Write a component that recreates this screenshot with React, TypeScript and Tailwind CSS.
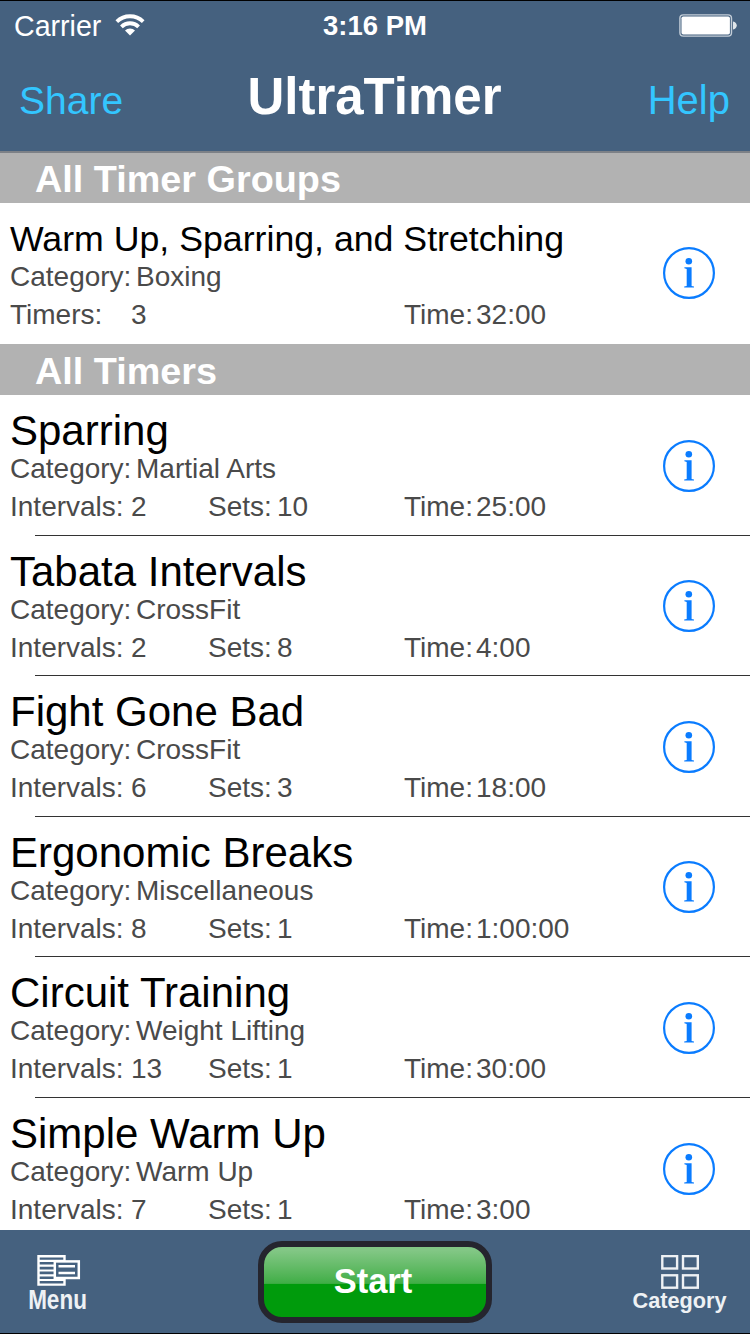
interface Timer {
  name: string
  category: string
  intervals: string
  sets: string
  time: string
}

const TIMERS: Timer[] = [
  { name: 'Sparring', category: 'Martial Arts', intervals: '2', sets: '10', time: '25:00' },
  { name: 'Tabata Intervals', category: 'CrossFit', intervals: '2', sets: '8', time: '4:00' },
  { name: 'Fight Gone Bad', category: 'CrossFit', intervals: '6', sets: '3', time: '18:00' },
  { name: 'Ergonomic Breaks', category: 'Miscellaneous', intervals: '8', sets: '1', time: '1:00:00' },
  { name: 'Circuit Training', category: 'Weight Lifting', intervals: '13', sets: '1', time: '30:00' },
  { name: 'Simple Warm Up', category: 'Warm Up', intervals: '7', sets: '1', time: '3:00' },
]

function WifiIcon() {
  return (
    <svg className="mb-0.5" width="30" height="22" viewBox="0 0 30 22" fill="none" stroke="white" strokeWidth="3.8">
      <path d="M1.8 7.6a19 19 0 0 1 26.4 0" />
      <path d="M6.4 12.8a12.2 12.2 0 0 1 17.2 0" />
      <path d="M15 21.6l-5-5.1a7 7 0 0 1 10 0z" fill="white" stroke="none" />
    </svg>
  )
}

function BatteryIcon() {
  return (
    <svg width="58" height="24" viewBox="0 0 58 24">
      <rect x="0.9" y="0.9" width="51.6" height="21.2" rx="3.4" fill="none" stroke="#c3cdd7" strokeWidth="1.4" />
      <rect x="2.5" y="2.5" width="48.4" height="18" rx="1.8" fill="white" />
      <path d="M54 7.5c5 1 5 7 0 8z" fill="#dfe5ea" />
    </svg>
  )
}

function InfoIcon() {
  return (
    <svg className="shrink-0" width="52" height="52" viewBox="0 0 52 52">
      <circle cx="26" cy="26" r="24.9" fill="none" stroke="#0a7cff" strokeWidth="2.2" />
      <circle cx="25.8" cy="14.2" r="3.3" fill="#0a7cff" />
      <path d="M21.4 20.2h7.2v18.8l2.4 0.5v1.1H21.2v-1.1l2.5-0.5v-17l-2.3-0.7z" fill="#0a7cff" />
    </svg>
  )
}

function MenuIcon() {
  return (
    <svg width="44" height="32" viewBox="0 0 44 32" fill="none" stroke="white">
      <path d="M27.5 6V1.2H1.5v28.4h26V24" strokeWidth="2.4" />
      <path d="M1 5.9h26M1 10.6h16M1 15.5h16M1 20.4h16M1 25h26" strokeWidth="2.1" />
      <rect x="17.8" y="6.4" width="24" height="16.6" strokeWidth="2.5" />
      <path d="M21.5 11.3h16.5M21.5 18h16.5" strokeWidth="2.4" />
    </svg>
  )
}

function CategoryIcon() {
  return (
    <svg width="38" height="34" viewBox="0 0 38 34" fill="none" stroke="#eef1f4" strokeWidth="2.4">
      <rect x="1.3" y="1.1" width="14.8" height="12.4" />
      <rect x="22" y="1.1" width="14.8" height="12.4" />
      <rect x="1.3" y="20.3" width="14.8" height="12.4" />
      <rect x="22" y="20.3" width="14.8" height="12.4" />
    </svg>
  )
}

function SectionHeader({ title, className }: { title: string; className: string }) {
  return <h2 className={`bg-[#b2b2b2] pl-[35px] text-[37.8px] font-bold text-white ${className}`}>{title}</h2>
}

function Field({ label, value, labelClass }: { label: string; value: string; labelClass: string }) {
  return (
    <div className="flex">
      <span className={`shrink-0 ${labelClass}`}>{label}</span>
      <span>{value}</span>
    </div>
  )
}

export default function App() {
  return (
    <div className="flex h-[1334px] w-[750px] flex-col overflow-hidden border-y border-black bg-white font-['Liberation_Sans',Arial,sans-serif] whitespace-nowrap">
      <header className="h-[152px] shrink-0 border-b-2 border-[#7d8187] bg-[#45617f] text-white">
        <div className="grid h-[50px] grid-cols-3 items-center text-[28px]">
          <div className="flex items-center gap-[14px] pl-[14px]">
            <span className="text-[28.6px]">Carrier</span>
            <WifiIcon />
          </div>
          <span className="text-center text-[27.5px] font-bold">3:16 PM</span>
          <div className="flex justify-end pr-[13px]">
            <BatteryIcon />
          </div>
        </div>
        <div className="flex items-baseline justify-between pr-5 pl-[19px]">
          <button className="w-[110px] text-left text-[39px] text-[#33c6ff]">Share</button>
          <h1 className="text-[51px] leading-[92px] font-bold">UltraTimer</h1>
          <button className="w-[110px] text-right text-[40px] text-[#33c6ff]">Help</button>
        </div>
      </header>

      <main className="min-h-0 flex-1 overflow-hidden text-[28px] leading-[38px] text-[#4a4a4a]">
        <SectionHeader title="All Timer Groups" className="h-[50px] leading-[52px]" />
        <div className="flex h-[141px] justify-between pr-[35px] pl-[10px]">
          <div className="pt-[11px]">
            <h3 className="h-11 text-[35.7px] leading-[51px] text-black">Warm Up, Sparring, and Stretching</h3>
            <Field label="Category:" value="Boxing" labelClass="w-[126px]" />
            <div className="grid grid-cols-[394px_auto]">
              <Field label="Timers:" value="3" labelClass="w-[121px]" />
              <Field label="Time:" value="32:00" labelClass="w-[72px]" />
            </div>
          </div>
          <div className="pt-11">
            <InfoIcon />
          </div>
        </div>

        <SectionHeader title="All Timers" className="h-[51px] leading-[54px]" />
        {TIMERS.map((t) => (
          <div key={t.name}>
            <div className="flex h-[139.6px] justify-between pr-[35px] pl-[10px]">
              <div className="pt-[11px]">
                <h3 className="h-11 text-[42px] leading-[50px] text-black">{t.name}</h3>
                <Field label="Category:" value={t.category} labelClass="w-[126px]" />
                <div className="grid grid-cols-[198px_196px_auto]">
                  <Field label="Intervals:" value={t.intervals} labelClass="w-[121px]" />
                  <Field label="Sets:" value={t.sets} labelClass="w-[69px]" />
                  <Field label="Time:" value={t.time} labelClass="w-[72px]" />
                </div>
              </div>
              <div className="pt-[44.6px]">
                <InfoIcon />
              </div>
            </div>
            <div className="ml-[35px] h-px bg-[#333]" />
          </div>
        ))}
      </main>

      <footer className="grid h-[103px] shrink-0 grid-cols-[258px_234px_258px] items-start bg-[#45617f] text-white">
        <button className="flex w-[117px] flex-col items-center pt-[25px]">
          <MenuIcon />
          <span className="mt-0.5 mr-0.5 scale-y-120 text-[22.5px] leading-6 font-bold text-[#eef1f4]">Menu</span>
        </button>
        <button className="mt-[11px] h-[82px] rounded-[24px] border-[6px] border-[#25252e] bg-linear-to-b from-[#82c785] from-5% via-[#3fae46] via-52% to-[#009b0c] to-53% pr-1 text-[34.5px] leading-[66px] font-bold">
          <span className="block pb-0.5">Start</span>
        </button>
        <button className="flex w-[141px] flex-col items-center justify-self-end pt-[25px]">
          <CategoryIcon />
          <span className="text-[21.7px] leading-6 font-bold text-[#eef1f4]">Category</span>
        </button>
      </footer>
    </div>
  )
}
